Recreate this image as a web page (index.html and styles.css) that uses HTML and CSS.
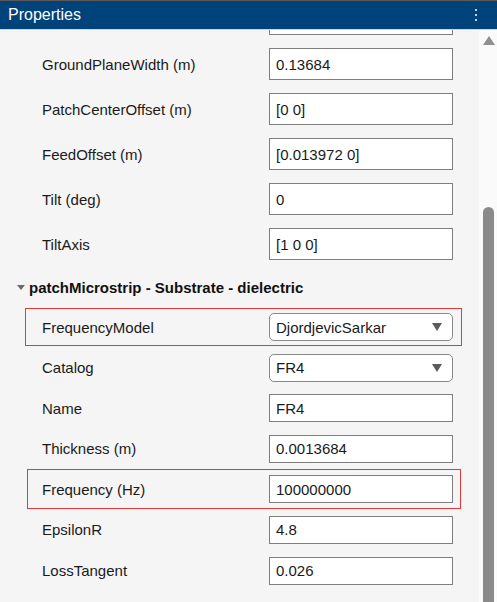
FILE: index.html
```html
<!DOCTYPE html>
<html>
<head>
<meta charset="utf-8">
<link rel="stylesheet" href="styles.css">
</head>
<body>
<div class="panel">
  <div class="titlebar">
    <span class="title">Properties</span>
    <span class="kebab"><i></i><i></i><i></i></span>
  </div>
  <div class="main">
    <div class="content">
      <div class="rows big">
        <div class="row"><span class="label">&nbsp;</span><div class="field"></div></div>
        <div class="row"><span class="label">GroundPlaneWidth (m)</span><div class="field">0.13684</div></div>
        <div class="row"><span class="label">PatchCenterOffset (m)</span><div class="field">[0 0]</div></div>
        <div class="row"><span class="label">FeedOffset (m)</span><div class="field">[0.013972 0]</div></div>
        <div class="row"><span class="label">Tilt (deg)</span><div class="field">0</div></div>
        <div class="row"><span class="label">TiltAxis</span><div class="field">[1 0 0]</div></div>
      </div>
      <div class="section">
        <span class="caret"></span>
        <span class="section-title">patchMicrostrip - Substrate - dielectric</span>
      </div>
      <div class="rows small">
        <div class="row hl"><span class="label">FrequencyModel</span><div class="field dropdown"><span>DjordjevicSarkar</span><span class="arrow"></span></div></div>
        <div class="row"><span class="label">Catalog</span><div class="field dropdown"><span>FR4</span><span class="arrow"></span></div></div>
        <div class="row"><span class="label">Name</span><div class="field">FR4</div></div>
        <div class="row"><span class="label">Thickness (m)</span><div class="field">0.0013684</div></div>
        <div class="row hl hl2"><span class="label">Frequency (Hz)</span><div class="field">100000000</div></div>
        <div class="row"><span class="label">EpsilonR</span><div class="field">4.8</div></div>
        <div class="row"><span class="label">LossTangent</span><div class="field">0.026</div></div>
      </div>
    </div>
    <div class="scrollbar">
      <span class="up"></span>
      <span class="thumb"></span>
    </div>
  </div>
</div>
</body>
</html>
```

FILE: styles.css
```css
* { box-sizing: border-box; }
html, body {
  margin: 0;
  padding: 0;
  width: 497px;
  height: 602px;
  overflow: hidden;
  background: #f5f5f5;
  font-family: "Liberation Sans", Arial, sans-serif;
}
.panel {
  display: flex;
  flex-direction: column;
  height: 602px;
}
.titlebar {
  height: 30px;
  flex: none;
  background: #00427a;
  border-top: 1px solid #5a5a5a;
  border-bottom: 1px solid #d4d4d4;
  display: flex;
  align-items: center;
  justify-content: space-between;
  padding-left: 8px;
  padding-right: 20px;
}
.title {
  color: #ffffff;
  font-size: 16px;
  line-height: 18px;
}
.kebab {
  display: flex;
  flex-direction: column;
  gap: 3px;
}
.kebab i {
  display: block;
  width: 2px;
  height: 2px;
  background: #ffffff;
  border-radius: 1px;
}
.main {
  flex: 1;
  display: flex;
  overflow: hidden;
}
.content {
  flex: 1;
  overflow: hidden;
}
.rows {
  display: flex;
  flex-direction: column;
  gap: 3px;
}
.rows.big { margin-top: -32px; }
.rows.small { gap: 2.6px; }
.row {
  margin-left: 25px;
  width: 437px;
  border: 1px solid transparent;
  padding: 4px 8px 4px 16px;
  display: flex;
  align-items: center;
  justify-content: space-between;
}
.row.hl { border-color: #e5383c; }
.row.hl2 {
  margin: -1px 0 -1px 27px;
  width: 434px;
  padding: 5px 7px 5px 14px;
}
.label {
  font-size: 15px;
  color: #1a1a1a;
  white-space: nowrap;
}
.field {
  width: 184px;
  background: #ffffff;
  border: 1px solid #7f7f7f;
  padding-left: 6px;
  font-size: 15px;
  color: #1a1a1a;
  display: flex;
  align-items: center;
  white-space: nowrap;
}
.big .field { height: 32px; }
.small .field { height: 28px; }
.dropdown {
  border-color: #8a8a8a;
  border-radius: 5px;
  justify-content: space-between;
  padding-right: 10px;
}
.arrow {
  width: 0;
  height: 0;
  border-left: 5px solid transparent;
  border-right: 5px solid transparent;
  border-top: 8px solid #5c5c5c;
}
.section {
  height: 20px;
  margin: 12px 0 11px 0;
  display: flex;
  align-items: center;
  padding-left: 17px;
}
.caret {
  width: 0;
  height: 0;
  border-left: 4px solid transparent;
  border-right: 4px solid transparent;
  border-top: 5px solid #6a6a6a;
  margin-right: 4px;
}
.section-title {
  font-size: 15px;
  font-weight: bold;
  color: #111111;
}
.scrollbar {
  width: 18px;
  flex: none;
  background: #fafafa;
  display: flex;
  flex-direction: column;
  align-items: center;
  padding-top: 6px;
}
.up {
  width: 0;
  height: 0;
  border-left: 6.5px solid transparent;
  border-right: 6.5px solid transparent;
  border-bottom: 9px solid #8f8f8f;
  margin-left: 1px;
}
.thumb {
  width: 11px;
  margin-top: 162px;
  margin-left: 1px;
  flex: 1;
  background: #8a8a8a;
  border-radius: 6px 6px 0 0;
}
```
